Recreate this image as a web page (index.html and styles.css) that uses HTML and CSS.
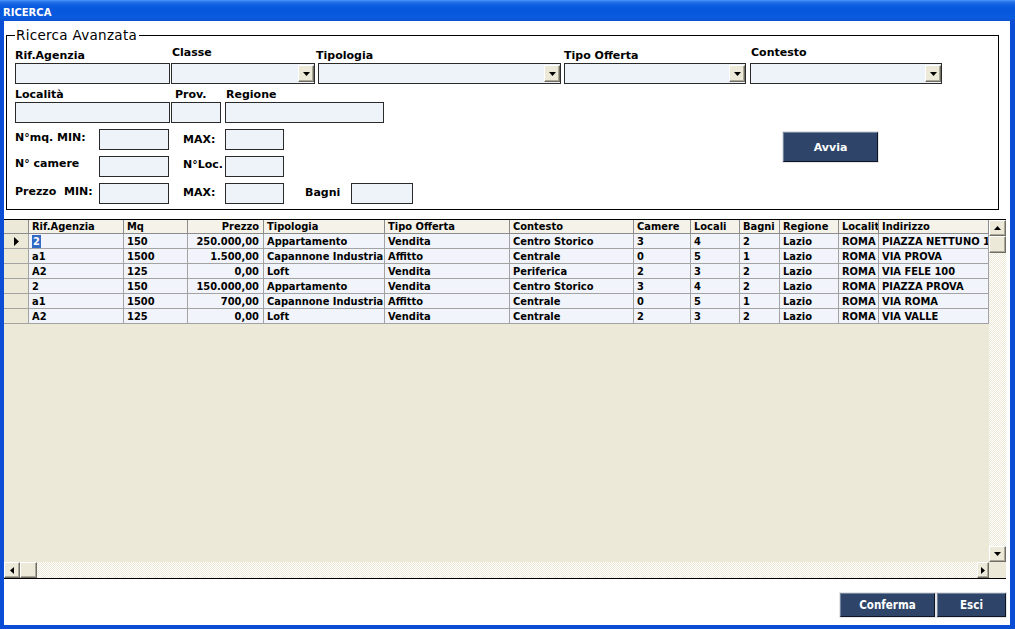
FILE: index.html
```html
<!DOCTYPE html>
<html lang="it">
<head>
<meta charset="utf-8">
<title>RICERCA</title>
<link rel="stylesheet" href="styles.css">
</head>
<body>
<div class="window">
  <div class="titlebar"><span class="title">RICERCA</span></div>
  <div class="client">
    <fieldset class="search">
      <legend>Ricerca Avanzata</legend>
      <div class="row">
        <div class="field f-rif"><label>Rif.Agenzia</label><input class="box" type="text"></div>
        <div class="field up f-classe"><label>Classe</label><div class="box combo"><span class="drop"><svg width="7" height="4" viewBox="0 0 7 4"><polygon points="0,0 7,0 3.5,4" fill="#000"/></svg></span></div></div>
        <div class="field f-tipologia"><label>Tipologia</label><div class="box combo"><span class="drop"><svg width="7" height="4" viewBox="0 0 7 4"><polygon points="0,0 7,0 3.5,4" fill="#000"/></svg></span></div></div>
        <div class="field f-offerta"><label>Tipo Offerta</label><div class="box combo"><span class="drop"><svg width="7" height="4" viewBox="0 0 7 4"><polygon points="0,0 7,0 3.5,4" fill="#000"/></svg></span></div></div>
        <div class="field up f-contesto"><label>Contesto</label><div class="box combo"><span class="drop"><svg width="7" height="4" viewBox="0 0 7 4"><polygon points="0,0 7,0 3.5,4" fill="#000"/></svg></span></div></div>
      </div>
      <div class="row row2">
        <div class="field f-loc"><label>Località</label><input class="box" type="text"></div>
        <div class="field f-prov"><label>Prov.</label><input class="box" type="text"></div>
        <div class="field f-reg"><label>Regione</label><input class="box" type="text"></div>
      </div>
      <div class="ranges">
        <div class="rfields">
          <div class="rrow">
            <label class="rl rl-a pt2">N°mq. MIN:</label><input class="box w70" type="text">
            <label class="rl rl-b pt4">MAX:</label><input class="box w59" type="text">
          </div>
          <div class="rrow">
            <label class="rl rl-a pt1">N° camere</label><input class="box w70" type="text">
            <label class="rl rl-b pt2">N°Loc.</label><input class="box w59" type="text">
          </div>
          <div class="rrow">
            <label class="rl rl-a pt2">Prezzo&nbsp; MIN:</label><input class="box w70" type="text">
            <label class="rl rl-b pt3">MAX:</label><input class="box w59" type="text">
            <label class="rl rl-c pt3">Bagni</label><input class="box w62" type="text">
          </div>
        </div>
        <button class="btn avvia" type="button">Avvia</button>
      </div>
    </fieldset>

    <div class="grid">
      <div class="grid-main">
        <div class="grid-body">
          <div class="gr head">
            <span class="ind"></span><span>Rif.Agenzia</span><span>Mq</span><span class="num">Prezzo</span><span>Tipologia</span><span>Tipo Offerta</span><span>Contesto</span><span>Camere</span><span>Locali</span><span>Bagni</span><span>Regione</span><span>Localit</span><span>Indirizzo</span>
          </div>
          <div class="gr">
            <span class="ind cur"><svg width="5" height="9" viewBox="0 0 5 9"><polygon points="0,0 5,4.5 0,9" fill="#000"/></svg></span><span><em class="sel">2</em></span><span>150</span><span class="num">250.000,00</span><span>Appartamento</span><span>Vendita</span><span>Centro Storico</span><span>3</span><span>4</span><span>2</span><span>Lazio</span><span>ROMA</span><span>PIAZZA NETTUNO 10</span>
          </div>
          <div class="gr">
            <span class="ind"></span><span>a1</span><span>1500</span><span class="num">1.500,00</span><span>Capannone Industria</span><span>Affitto</span><span>Centrale</span><span>0</span><span>5</span><span>1</span><span>Lazio</span><span>ROMA</span><span>VIA PROVA</span>
          </div>
          <div class="gr">
            <span class="ind"></span><span>A2</span><span>125</span><span class="num">0,00</span><span>Loft</span><span>Vendita</span><span>Periferica</span><span>2</span><span>3</span><span>2</span><span>Lazio</span><span>ROMA</span><span>VIA FELE 100</span>
          </div>
          <div class="gr">
            <span class="ind"></span><span>2</span><span>150</span><span class="num">150.000,00</span><span>Appartamento</span><span>Vendita</span><span>Centro Storico</span><span>3</span><span>4</span><span>2</span><span>Lazio</span><span>ROMA</span><span>PIAZZA PROVA</span>
          </div>
          <div class="gr">
            <span class="ind"></span><span>a1</span><span>1500</span><span class="num">700,00</span><span>Capannone Industria</span><span>Affitto</span><span>Centrale</span><span>0</span><span>5</span><span>1</span><span>Lazio</span><span>ROMA</span><span>VIA ROMA</span>
          </div>
          <div class="gr">
            <span class="ind"></span><span>A2</span><span>125</span><span class="num">0,00</span><span>Loft</span><span>Vendita</span><span>Centrale</span><span>2</span><span>3</span><span>2</span><span>Lazio</span><span>ROMA</span><span>VIA VALLE</span>
          </div>
        </div>
        <div class="vscroll">
          <span class="sbtn vbtn"><svg width="7" height="4" viewBox="0 0 7 4"><polygon points="3.5,0 7,4 0,4" fill="#000"/></svg></span>
          <span class="sbtn vthumb"></span>
          <span class="track"></span>
          <span class="sbtn vbtn"><svg width="7" height="4" viewBox="0 0 7 4"><polygon points="0,0 7,0 3.5,4" fill="#000"/></svg></span>
        </div>
      </div>
      <div class="hbar">
        <div class="hscroll">
          <span class="sbtn hleft"><svg width="4" height="7" viewBox="0 0 4 7"><polygon points="4,0 4,7 0,3.5" fill="#000"/></svg></span>
          <span class="sbtn hthumb"></span>
          <span class="track"></span>
          <span class="sbtn hright"><svg width="4" height="7" viewBox="0 0 4 7"><polygon points="0,0 4,3.5 0,7" fill="#000"/></svg></span>
        </div>
        <span class="corner"></span>
      </div>
    </div>

    <div class="actions">
      <button class="btn cond conferma" type="button">Conferma</button>
      <button class="btn cond esci" type="button">Esci</button>
    </div>
  </div>
</div>
</body>
</html>
```

FILE: styles.css
```css
* { box-sizing: border-box; }
html, body { margin: 0; padding: 0; }
body {
  width: 1015px;
  height: 629px;
  overflow: hidden;
  background: #fff;
  font-family: "DejaVu Sans", sans-serif;
  color: #000;
}

.window {
  width: 1015px;
  height: 629px;
  display: flex;
  flex-direction: column;
  background: #0C4DD6;
}

.titlebar {
  flex: none;
  height: 21px;
  padding: 4px 0 0 3px;
  background: linear-gradient(to bottom, #4C97F8 0, #2470EA 2px, #0A5CE0 6px, #0756DC 50%, #0A5BDE 85%, #0A50D2 100%);
}
.title {
  display: block;
  color: #fff;
  font: bold 10px/17px "DejaVu Sans", sans-serif;
}

.client {
  flex: 1;
  min-height: 0;
  margin: 0 5px 4px 4px;
  padding-right: 4px;
  background: #fff;
  display: flex;
  flex-direction: column;
}

/* ---------- search panel ---------- */
.search {
  margin: 6px 7px 0 2px;
  padding: 3px 0 5px 8px;
  border: 1px solid #000;
  min-width: 0;
}
.search legend {
  padding: 0 2px 0 1px;
  font: 13.5px/16px "DejaVu Sans", sans-serif;
  letter-spacing: 0.3px;
  color: #000;
}

.row {
  display: flex;
  align-items: flex-end;
}
.row2 { margin-top: 4px; }

.field {
  display: flex;
  flex-direction: column;
}
.field label,
.rl {
  font: bold 11px/13px "DejaVu Sans", sans-serif;
  white-space: nowrap;
}
.field label { margin-bottom: 1px; }
.field.up label { margin-bottom: 4px; padding-left: 1px; }

.box {
  display: block;
  height: 21px;
  margin: 0;
  padding: 0;
  border: 1px solid #2A2A2A;
  background: #EEF2F9;
  font: 11px "DejaVu Sans", sans-serif;
  outline: none;
}
.field .box { width: 100%; }

.f-rif { width: 155px; }
.f-classe { width: 144px; margin-left: 1px; }
.f-tipologia { width: 243px; margin-left: 3px; }
.f-tipologia label { margin-left: -2px; }
.f-offerta { width: 182px; margin-left: 3px; }
.f-contesto { width: 192px; margin-left: 4px; }

.f-loc { width: 155px; }
.f-prov { width: 50px; margin-left: 1px; }
.f-prov label { padding-left: 4px; }
.f-reg { width: 159px; margin-left: 4px; }
.f-reg label { padding-left: 1px; }

.combo {
  display: flex;
  justify-content: flex-end;
  align-items: flex-start;
  padding: 1px 0 0 0;
}
.drop {
  width: 16px;
  height: 17px;
  background: #ECE9D8;
  border: 1px solid;
  border-color: #FFFFFF #716F64 #716F64 #FFFFFF;
  box-shadow: inset -1px -1px 0 #ACA899;
  display: flex;
  align-items: center;
  justify-content: center;
}

.ranges {
  display: flex;
  align-items: flex-start;
  margin-top: 6px;
}
.rfields {
  flex: none;
  width: 398px;
  display: flex;
  flex-direction: column;
  gap: 6px;
}
.rrow {
  display: flex;
  height: 21px;
}
.rl { flex: none; }
.rl-a { width: 84px; }
.rl-b { width: 56px; padding-left: 14px; }
.rl-c { width: 67px; padding-left: 21px; }
.pt1 { padding-top: 1px; }
.pt2 { padding-top: 2px; }
.pt3 { padding-top: 3px; }
.pt4 { padding-top: 4px; }
.w70 { width: 70px; flex: none; }
.w59 { width: 59px; flex: none; }
.w62 { width: 62px; flex: none; }

.btn {
  margin: 0;
  padding: 0;
  background: #2E4569;
  color: #fff;
  border: 1px solid;
  border-color: #71839F #0E1524 #0E1524 #71839F;
  box-shadow: 0 0 0 1px #E4E4E4;
  font: bold 11px "DejaVu Sans", sans-serif;
  cursor: default;
}
.btn.cond {
  font-family: "DejaVu Sans Condensed", "DejaVu Sans", sans-serif;
  font-size: 11.5px;
}
.avvia {
  flex: none;
  width: 95px;
  height: 30px;
  margin: 3px 0 0 370px;
}

/* ---------- data grid ---------- */
.grid {
  flex: none;
  height: 360px;
  margin-top: 9px;
  border-top: 1px solid #000;
  border-bottom: 1px solid #000;
  display: flex;
  flex-direction: column;
}
.grid-main {
  flex: 1;
  min-height: 0;
  display: flex;
}
.grid-body {
  flex: 1;
  min-width: 0;
  background: #ECE9D8;
  overflow: hidden;
}
.gr {
  display: grid;
  grid-template-columns: 25px 95px 64px 76px 121px 125px 124px 57px 49px 40px 59px 40px 110px;
  height: 15px;
}
.gr > span {
  display: block;
  padding: 0 0 0 3px;
  border-right: 1px solid #A3A3A3;
  border-bottom: 1px solid #A3A3A3;
  background: #F1F4FA;
  font: bold 11px/15px "DejaVu Sans Condensed", "DejaVu Sans", sans-serif;
  white-space: nowrap;
  overflow: hidden;
}
.gr.head { height: 14px; }
.gr.head > span {
  line-height: 14px;
  background: #F4F2E9;
  border-color: #8C8C8C;
}
.gr > span.num {
  text-align: right;
  padding: 0 4px 0 0;
}
.gr > span.ind {
  background: #ECE9D8;
  padding: 0;
}
.gr > span.cur {
  display: flex;
  align-items: center;
  justify-content: center;
}
.sel {
  font-style: normal;
  background: #316AC5;
  color: #fff;
  padding: 0 1px;
}

.sbtn {
  display: flex;
  align-items: center;
  justify-content: center;
  flex: none;
  background: #ECE9D8;
  border: 1px solid;
  border-color: #FFFFFF #716F64 #716F64 #FFFFFF;
  box-shadow: inset -1px -1px 0 #ACA899;
}
.track {
  flex: 1;
  background: repeating-conic-gradient(#ECE9D8 0 25%, #FFFFFF 0 50%) 0 0 / 2px 2px;
}

.vscroll {
  flex: none;
  width: 17px;
  display: flex;
  flex-direction: column;
}
.vbtn { height: 16px; }
.vthumb { height: 17px; }

.hbar {
  flex: none;
  height: 16px;
  display: flex;
}
.hscroll {
  flex: 1;
  display: flex;
}
.hleft { width: 16px; }
.hthumb { width: 17px; }
.hright { width: 12px; }
.corner {
  flex: none;
  width: 17px;
  background: #ECE9D8;
}

/* ---------- bottom buttons ---------- */
.actions {
  display: flex;
  justify-content: flex-end;
  gap: 2px;
  margin-top: 14px;
}
.conferma { width: 95px; height: 24px; }
.esci { width: 69px; height: 24px; }
```
